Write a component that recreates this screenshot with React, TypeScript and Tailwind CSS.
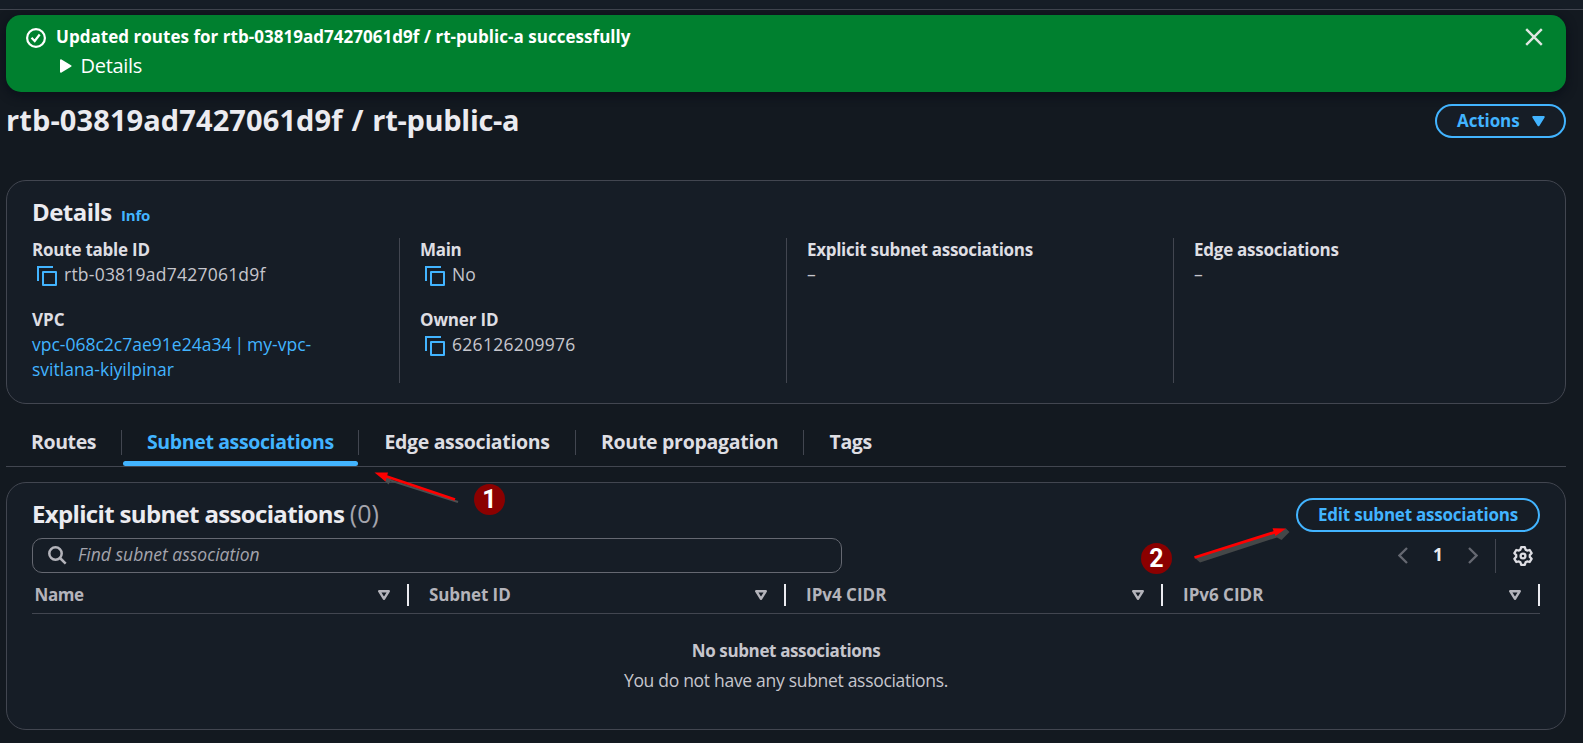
import type { ReactNode } from "react";

function CopyIcon() {
  return (
    <svg width="20" height="20" viewBox="0 0 20 20" fill="none" stroke="#42b4ff" strokeWidth="2" className="mt-[4px] shrink-0">
      <path d="M1 15V1h15" />
      <rect x="6" y="6" width="13" height="13" strokeLinejoin="round" />
    </svg>
  );
}

function SortIcon() {
  return (
    <svg width="12" height="10" viewBox="0 0 12 10" fill="none" stroke="#b4b4bb" strokeWidth="2.4" strokeLinejoin="round" className="mr-[17px]">
      <path d="M1.2 1.2h9.6L6 8.800z" />
    </svg>
  );
}

function Label({ children, className = "" }: { children: ReactNode; className?: string }) {
  return <div className={`text-[17px] font-bold text-[#dedee3] ${className}`}>{children}</div>;
}

function Copyable({ children, className = "" }: { children: ReactNode; className?: string }) {
  return (
    <div className="flex pl-[5px]">
      <CopyIcon />
      <span className={`ml-[7px] ${className}`}>{children}</span>
    </div>
  );
}

const columns = [
  { title: "Name", spacing: "tracking-[-0.4px] pl-[2.5px]" },
  { title: "Subnet ID", spacing: "tracking-[-0.100px] pl-[20px]" },
  { title: "IPv4 CIDR", spacing: "pl-[20px]" },
  { title: "IPv6 CIDR", spacing: "pl-[20px]" },
];

function Badge({ n, className }: { n: number; className: string }) {
  return (
    <div className={`absolute flex h-[31px] w-[31px] items-center justify-center rounded-full bg-[#8b0000] font-['Roboto',sans-serif] text-[25px] leading-[31px] font-bold text-white ${className}`}>
      {n}
    </div>
  );
}

function Arrows() {
  return (
    <svg className="pointer-events-none absolute top-0 left-0" width="1583" height="743" viewBox="0 0 1583 743">
      <path d="M386 479 458 502" stroke="#4b4e50" strokeWidth="2.200" />
      <path d="M380 476l8.500 8.500 4-7z" fill="#4b4e50" />
      <path d="M386 476.300 455 499.500" stroke="#ff0000" strokeWidth="2.600" />
      <path d="M374.500 472.400 388 472.600 385.500 481.500z" fill="#ff0000" />
      <path d="M1194.500 557.500 1200 562.500 1277 537.500 1281.500 540 1289.500 532 1286 528.500z" fill="#444748" />
      <path d="M1194.500 557.500 1276 531.800" stroke="#ff0000" strokeWidth="2.800" />
      <path d="M1286 528.400 1272.500 528.200 1275.500 536z" fill="#ff0000" />
    </svg>
  );
}

export default function App() {
  return (
    <div className="relative h-[743px] w-[1583px] overflow-hidden bg-[#131920] font-['Open_Sans',sans-serif] text-[17.5px] leading-[25px] text-[#c6c6cd]">
      <div className="h-[10px] border-b border-[#424650] bg-[#161d26]" />

      <section className="mt-[5px] ml-[6px] flex h-[77px] w-[1560px] rounded-[15px] bg-[#00802f] pt-[9px] pl-[20px] text-white shadow-[0_3px_8px_2px_rgba(8,14,24,0.6)]">
        <svg width="20" height="20" viewBox="0 0 20 20" fill="none" stroke="#fff" strokeWidth="2.2" className="mt-[4px]">
          <circle cx="10" cy="10" r="8.900" />
          <path d="M5.500 9.800l3.200 3.200 5-6.500" />
        </svg>
        <div className="ml-[10px] grow">
          <div className="text-[17px] font-bold tracking-[0.030px]">Updated routes for rtb-03819ad7427061d9f / rt-public-a successfully</div>
          <div className="mt-[2px] flex items-center text-[20px] leading-[30px] tracking-[-0.300px]">
            <svg width="12" height="14" viewBox="0 0 12 14" className="ml-[4px]" fill="#fff">
              <path d="M0 1.200C0 .3.800 0 1.500.4l9.500 5.800c.7.400.7 1.200 0 1.600L1.500 13.600C.8 14 0 13.700 0 12.800z" />
            </svg>
            <span className="ml-[8.500px]">Details</span>
          </div>
        </div>
        <svg width="18" height="18" viewBox="0 0 18 18" stroke="#dfe6e2" strokeWidth="2.400" className="mt-[4px] mr-[23px]">
          <path d="M1.200 1.200l15.600 15.600M16.800 1.200L1.200 16.800" />
        </svg>
      </section>

      <header className="mt-[8px] ml-[6px] flex h-[38px] w-[1560px] justify-between">
        <h1 className="mt-px text-[29px] leading-[38px] font-bold tracking-[0.100px] text-[#ebebf0] [word-spacing:1.200px]">
          rtb-03819ad7427061d9f / <span className="tracking-[-0.300px]">rt-public-a</span>
        </h1>
        <button className="mt-[4px] flex h-[34px] w-[131px] items-center rounded-full border-2 border-[#42b4ff] bg-[#161d26] pl-[20px] text-[17px] font-bold text-[#42b4ff]">
          <span className="-mt-[2px] w-[62px] tracking-[-0.100px]">Actions</span>
          <svg width="13" height="11" viewBox="0 0 13 11" className="ml-[13px]" fill="#42b4ff">
            <path d="M1.200 0h10.600c.9 0 1.200.8.800 1.400L7.300 9.900c-.4.600-1.200.600-1.600 0L.400 1.400C0 .8.300 0 1.200 0z" />
          </svg>
        </button>
      </header>

      <section className="mt-[42px] ml-[6px] h-[224px] w-[1560px] rounded-[20px] border border-[#424650] bg-[#161d26] px-[25px] pt-[15px]">
        <div className="flex h-[30px] items-baseline">
          <h2 className="text-[24px] leading-[31px] font-bold tracking-[-0.550px] text-[#ebebf0]">Details</h2>
          <a className="ml-[9.500px] text-[15px] leading-[25px] font-bold tracking-[-0.250px] text-[#42b4ff]">Info</a>
        </div>
        <div className="mt-[12px] grid h-[145px] grid-cols-[367px_387px_387px_367px]">
          <div className="-mt-px">
            <Label className="tracking-[-0.230px]">Route table ID</Label>
            <Copyable className="tracking-[0.230px]">rtb-03819ad7427061d9f</Copyable>
            <Label className="mt-[20px]">VPC</Label>
            <a className="block text-[#42b4ff]">
              <span className="block [word-spacing:-1.500px]">vpc-068c2c7ae91e24a34 | my-vpc-</span>
              <span className="block">svitlana-kiyilpinar</span>
            </a>
          </div>
          <div className="border-l border-[#424650] pl-[20px]">
            <div className="-mt-px">
              <Label className="tracking-[-0.300px]">Main</Label>
              <Copyable>No</Copyable>
              <Label className="mt-[20px] tracking-[-0.150px]">Owner ID</Label>
              <Copyable className="tracking-[0.300px]">626126209976</Copyable>
            </div>
          </div>
          <div className="border-l border-[#424650] pl-[20px]">
            <div className="-mt-px">
              <Label className="tracking-[-0.300px]">Explicit subnet associations</Label>
              <div>–</div>
            </div>
          </div>
          <div className="border-l border-[#424650] pl-[20px]">
            <div className="-mt-px">
              <Label className="tracking-[-0.250px]">Edge associations</Label>
              <div>–</div>
            </div>
          </div>
        </div>
      </section>

      <nav className="ml-[6px] flex h-[63px] w-[1560px] border-b border-[#424650] pt-[26px] text-[19.5px] leading-[25px] font-bold text-[#dedee3]">
        <div className="h-[25px] w-[116px] border-r border-[#424650] pl-[25px]"><span className="relative -top-px tracking-[-0.400px]">Routes</span></div>
        <div className="relative h-[25px] w-[237px] border-r border-[#424650] pl-[25px] text-[#42b4ff]">
          <span className="relative -top-px tracking-[-0.370px]">Subnet associations</span>
          <div className="absolute top-[31px] left-px h-[5px] w-[235px] rounded-[2.500px] bg-[#42b4ff]" />
        </div>
        <div className="h-[25px] w-[217px] border-r border-[#424650] pl-[25.500px]"><span className="relative -top-px tracking-[-0.340px]">Edge associations</span></div>
        <div className="h-[25px] w-[228px] border-r border-[#424650] pl-[25px]"><span className="relative -top-px tracking-[-0.290px]">Route propagation</span></div>
        <div className="h-[25px] pl-[25.500px]"><span className="relative -top-px tracking-[-0.400px]">Tags</span></div>
      </nav>

      <section className="mt-[15px] ml-[6px] h-[248px] w-[1560px] rounded-[20px] border border-[#424650] bg-[#161d26] px-[25px] pt-[15px]">
        <div className="flex h-[34px] justify-between">
          <h2 className="text-[24px] leading-[31px] font-bold tracking-[-0.660px] text-[#ebebf0]">
            Explicit subnet associations <span className="text-[25px] font-normal tracking-[0.100px] text-[#a4a4ad]">(0)</span>
          </h2>
          <button className="flex h-[34px] w-[244px] items-center justify-center rounded-full border-2 border-[#42b4ff] bg-[#161d26] text-[17px] font-bold tracking-[-0.220px] text-[#42b4ff]">
            <span className="-mt-px">Edit subnet associations</span>
          </button>
        </div>
        <div className="mt-[6px] flex h-[35px] justify-between">
          <div className="flex w-[810px] items-center rounded-[10px] border border-[#656871] bg-[#161d26] pl-[15px]">
            <svg width="19" height="19" viewBox="0 0 19 19" fill="none" stroke="#b4b4bb" strokeWidth="2.500">
              <circle cx="7.500" cy="7.500" r="6.200" />
              <path d="M12 12l5.700 5.700" />
            </svg>
            <span className="-mt-[3px] ml-[11px] text-[#a4a4ad] italic">Find subnet association</span>
          </div>
          <div className="flex items-center">
            <svg width="10" height="17" viewBox="0 0 10 17" fill="none" stroke="#656871" strokeWidth="2.300"><path d="M9 1L1.500 8.500 9 16" /></svg>
            <span className="-mt-[3px] ml-[25px] w-[11px] font-bold text-[#ebebf0]">1</span>
            <svg width="10" height="17" viewBox="0 0 10 17" fill="none" stroke="#656871" strokeWidth="2.300" className="ml-[24px]"><path d="M1 1l7.500 7.500L1 16" /></svg>
            <div className="ml-[17px] h-[34px] w-px bg-[#424650]" />
            <svg width="20" height="20" viewBox="0 0 20 20" fill="none" stroke="#dedee3" strokeWidth="2.300" strokeLinejoin="round" className="mr-[7px] ml-[17px]">
              <path d="M8.200 1.200h3.600l.8 2.500 1.500.9 2.600-.6 1.900 3.200-1.800 1.900v1.800l1.800 1.900-1.900 3.200-2.600-.6-1.500.9-.8 2.500H8.200l-.8-2.500-1.500-.9-2.600.6-1.900-3.200 1.800-1.900V9.100L1.400 7.200 3.300 4l2.600.6 1.500-.9z" />
              <circle cx="10" cy="10" r="2.400" />
            </svg>
          </div>
        </div>
        <div className="grid h-[41px] grid-cols-4 border-b border-[#424650] pt-[11px]">
          {columns.map((c) => (
            <div key={c.title} className="flex h-[22px] items-center justify-between border-r-2 border-[#ebebf0]">
              <span className={`-mt-px text-[17px] font-bold text-[#b4b4bb] ${c.spacing}`}>{c.title}</span>
              <SortIcon />
            </div>
          ))}
        </div>
        <div className="mt-[24px] flex flex-col items-center gap-[5px]">
          <div className="text-[17px] font-bold tracking-[-0.370px]">No subnet associations</div>
          <div className="tracking-[-0.300px]">You do not have any subnet associations.</div>
        </div>
      </section>

      <Arrows />
      <Badge n={1} className="top-[484px] left-[474px]" />
      <Badge n={2} className="top-[543px] left-[1141px]" />
    </div>
  );
}
